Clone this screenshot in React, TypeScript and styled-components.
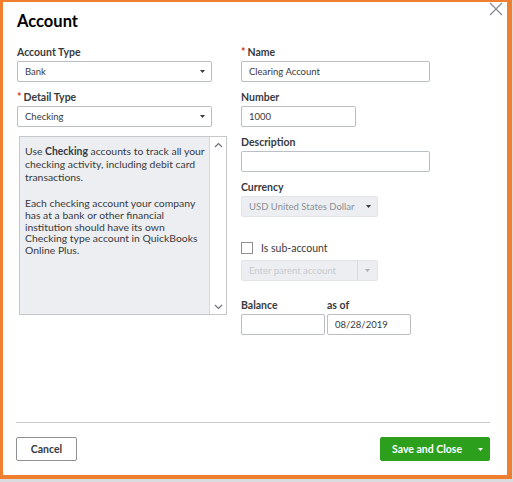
import * as React from "react";
import styled, { createGlobalStyle } from "styled-components";

const GlobalStyle = createGlobalStyle`
  html, body {
    margin: 0;
    padding: 0;
    background: #d9dbde;
  }
  body {
    font-family: Lato, "Open Sans", "Liberation Sans", sans-serif;
    color: #393a3d;
  }
`;

const Frame = styled.div`
  width: 474px;
  height: 459px;
  border-style: solid;
  border-color: #ef7f2e;
  border-width: 2px 5px 4px 3px;
  background: #fff;
  position: relative;
  display: flex;
  flex-direction: column;
  padding: 0 17px 14px 13px;
  box-sizing: content-box;
`;

const Close = styled.button`
  position: absolute;
  top: 0;
  right: 3px;
  width: 16px;
  height: 16px;
  padding: 0;
  border: 0;
  background: none;
  color: #8d9096;
  cursor: pointer;
`;

const Title = styled.h1`
  margin: 8px 0 0 1px;
  font-size: 16.5px;
  line-height: 22px;
  font-weight: 700;
  color: #000;
`;

const Columns = styled.div`
  display: flex;
  margin-top: 13px;
  margin-left: 1px;
`;

const LeftCol = styled.div`
  width: 224px;
  display: flex;
  flex-direction: column;
`;

const RightCol = styled.div`
  flex: 1;
  display: flex;
  flex-direction: column;
`;

const Field = styled.div<{ $gap?: number }>`
  display: flex;
  flex-direction: column;
  margin-bottom: ${(p) => p.$gap ?? 8}px;
`;

const Label = styled.label`
  font-size: 10.5px;
  line-height: 15px;
  font-weight: 700;
  margin-bottom: 1px;
  color: #393a3d;
  white-space: nowrap;
`;

const Star = styled.span`
  color: #d52b1e;
  margin-right: 2px;
`;

const Input = styled.div<{ $w: number }>`
  width: ${(p) => p.$w}px;
  height: 21px;
  box-sizing: border-box;
  border: 1px solid #babec5;
  border-radius: 2px;
  background: #fff;
  font-size: 9.5px;
  display: flex;
  align-items: center;
  padding: 0 7px;
  color: #393a3d;
`;

const Select = styled(Input)<{ $disabled?: boolean }>`
  justify-content: space-between;
  padding-right: 6px;
  background: ${(p) => (p.$disabled ? "#eceef1" : "#fff")};
  border-color: ${(p) => (p.$disabled ? "#e0e3e7" : "#babec5")};
  color: ${(p) => (p.$disabled ? "#8d9096" : "#393a3d")};
`;

const Caret = ({ color = "#393a3d" }: { color?: string }) => (
  <svg width="5" height="3" viewBox="0 0 5 3">
    <path d="M0 0h5L2.5 3z" fill={color} />
  </svg>
);

const ParentSelect = styled.div`
  width: 137px;
  height: 21px;
  box-sizing: border-box;
  border: 1px solid #e0e3e7;
  border-radius: 2px;
  background: #eceef1;
  display: flex;
  align-items: stretch;
  font-size: 9.5px;
  color: #c7cacf;
`;

const ParentText = styled.span`
  flex: 1;
  display: flex;
  align-items: center;
  padding-left: 7px;
  border-right: 1px solid #d7dadf;
`;

const ParentArrow = styled.span`
  width: 19px;
  display: flex;
  align-items: center;
  justify-content: center;
`;

const InfoBox = styled.div`
  margin: 1px 0 0 2px;
  width: 208px;
  height: 179px;
  box-sizing: border-box;
  border: 1px solid #c4c7cc;
  background: #eceef1;
  display: flex;
`;

const InfoText = styled.div`
  flex: 1;
  min-width: 0;
  overflow: hidden;
  padding: 8px 0 0 5px;
  font-size: 10.4px;
  color: #393a3d;
`;

const Para = styled.p<{ $lh: number }>`
  margin: 0 0 14px;
  line-height: ${(p) => p.$lh}px;
  white-space: nowrap;
  span {
    display: block;
  }
  b {
    font-weight: 700;
  }
`;

const Scrollbar = styled.div`
  width: 17px;
  flex-shrink: 0;
  box-sizing: border-box;
  background: #fff;
  border-left: 1px solid #d4d7dc;
  display: flex;
  flex-direction: column;
  justify-content: space-between;
  align-items: center;
  padding: 5px 0 4px;
`;

const Chevron = ({ up }: { up?: boolean }) => (
  <svg width="9" height="6" viewBox="0 0 9 6" style={{ display: "block" }}>
    <path
      d={up ? "M1 5l3.5-3.5L8 5" : "M1 1l3.5 3.5L8 1"}
      fill="none"
      stroke="#6b6c72"
      strokeWidth="1.1"
    />
  </svg>
);

const CheckRow = styled.div`
  display: flex;
  align-items: center;
  margin: 25px 0 6px;
  font-size: 10.5px;
`;

const Box = styled.span`
  width: 12px;
  height: 12px;
  box-sizing: border-box;
  border: 1px solid #8d9096;
  margin-right: 8px;
  background: #fff;
`;

const Pair = styled.div`
  display: flex;
  gap: 2px;
  margin-top: 17px;
`;

const Spacer = styled.div`
  flex: 1;
`;

const Divider = styled.hr`
  margin: 0 0 14px;
  border: 0;
  border-top: 1px solid #c8cbd0;
`;

const Footer = styled.div`
  display: flex;
  justify-content: space-between;
`;

const Button = styled.button`
  height: 24px;
  border-radius: 2px;
  font-family: inherit;
  font-size: 10.5px;
  font-weight: 700;
  cursor: pointer;
  padding: 0;
`;

const CancelButton = styled(Button)`
  width: 61px;
  background: #fff;
  border: 1px solid #8d9096;
  color: #393a3d;
`;

const SaveButton = styled(Button)`
  width: 110px;
  background: #2ca01c;
  border: 1px solid #2ca01c;
  color: #fff;
  display: flex;
  align-items: center;
  padding: 0 6px 0 11px;
  justify-content: space-between;
`;

export default function App() {
  return (
    <>
      <GlobalStyle />
      <Frame>
        <Close aria-label="Close">
          <svg width="14" height="14" viewBox="0 0 14 14">
            <path d="M1 1l12 12M13 1L1 13" stroke="#8d9096" strokeWidth="1.4" />
          </svg>
        </Close>
        <Title>Account</Title>
        <Columns>
          <LeftCol>
            <Field>
              <Label>Account Type</Label>
              <Select $w={195}>
                Bank <Caret />
              </Select>
            </Field>
            <Field>
              <Label>
                <Star>*</Star>Detail Type
              </Label>
              <Select $w={195}>
                Checking <Caret />
              </Select>
            </Field>
            <InfoBox>
              <InfoText>
                <Para $lh={13}>
                  <span>
                    Use <b>Checking</b> accounts to track all your
                  </span>
                  <span>checking activity, including debit card</span>
                  <span>transactions.</span>
                </Para>
                <Para $lh={11.8}>
                  <span>Each checking account your company</span>
                  <span>has at a bank or other financial</span>
                  <span>institution should have its own</span>
                  <span>Checking type account in QuickBooks</span>
                  <span>Online Plus.</span>
                </Para>
              </InfoText>
              <Scrollbar>
                <Chevron up />
                <Chevron />
              </Scrollbar>
            </InfoBox>
          </LeftCol>
          <RightCol>
            <Field>
              <Label>
                <Star>*</Star>Name
              </Label>
              <Input $w={189}>Clearing Account</Input>
            </Field>
            <Field>
              <Label>Number</Label>
              <Input $w={115}>1000</Input>
            </Field>
            <Field>
              <Label>Description</Label>
              <Input $w={189} />
            </Field>
            <Field $gap={0}>
              <Label>Currency</Label>
              <Select $w={137} $disabled>
                USD United States Dollar <Caret />
              </Select>
            </Field>
            <CheckRow>
              <Box />
              Is sub-account
            </CheckRow>
            <ParentSelect>
              <ParentText>Enter parent account</ParentText>
              <ParentArrow>
                <Caret color="#a9adb3" />
              </ParentArrow>
            </ParentSelect>
            <Pair>
              <Field $gap={0}>
                <Label>Balance</Label>
                <Input $w={84} />
              </Field>
              <Field $gap={0}>
                <Label>as of</Label>
                <Input $w={84}>08/28/2019</Input>
              </Field>
            </Pair>
          </RightCol>
        </Columns>
        <Spacer />
        <Divider />
        <Footer>
          <CancelButton>Cancel</CancelButton>
          <SaveButton>
            Save and Close <Caret color="#fff" />
          </SaveButton>
        </Footer>
      </Frame>
    </>
  );
}
